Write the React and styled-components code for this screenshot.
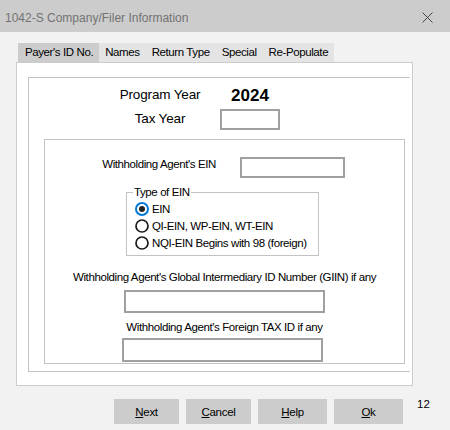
import React from "react";
import styled, { createGlobalStyle } from "styled-components";

const GlobalStyle = createGlobalStyle`
  html, body { margin: 0; padding: 0; }
  body {
    background: #f2f2f2;
    font-family: "Liberation Sans", Arial, sans-serif;
    color: #000;
  }
`;

const Window = styled.div`
  width: 450px;
  height: 430px;
  display: flex;
  flex-direction: column;
  background: #f2f2f2;
  overflow: hidden;
`;

const TitleBar = styled.div`
  height: 32px;
  box-sizing: border-box;
  padding: 3px 17px 0 5px;
  background: #cccccc;
  display: flex;
  align-items: center;
  justify-content: space-between;
`;

const Title = styled.span`
  font-size: 12px;
  color: #737373;
  line-height: 16px;
`;

const Body = styled.div`
  padding: 11px 0 0 16px;
  display: flex;
  flex-direction: column;
`;

const TabStrip = styled.div`
  display: flex;
  height: 19px;
  margin-left: 2px;
`;

const Tab = styled.div`
  padding: 0 ${(p) => (p.$active ? "6px 0 7px" : "6px")};
  background: ${(p) => (p.$active ? "#cccccc" : "#e4e4e4")};
  font-size: 11.5px;
  letter-spacing: -0.4px;
  line-height: 19px;
  white-space: nowrap;
`;

const Panel = styled.div`
  width: 397px;
  height: 324px;
  box-sizing: border-box;
  border: 1px solid #cccccc;
  background: #ffffff;
  padding: 14px 0 0 11px;
`;

const OuterGroup = styled.div`
  width: 382px;
  height: 295px;
  box-sizing: border-box;
  border-top: 1px solid #c3c3c3;
  border-left: 1px solid #c3c3c3;
  border-bottom: 1px solid #c3c3c3;
  padding-top: 5px;
`;

const YearGrid = styled.div`
  display: grid;
  grid-template-columns: 100px 80px;
  grid-auto-rows: 24px;
  margin-left: 81px;
  align-items: center;
  justify-items: center;
`;

const BigLabel = styled.span`
  font-size: 13.5px;
  letter-spacing: -0.15px;
  line-height: 16px;
  white-space: nowrap;
`;

const YearValue = styled.span`
  font-size: 17px;
  font-weight: bold;
  line-height: 20px;
  margin-top: 2px;
`;

const TextBox = styled.input`
  width: ${(p) => p.$w}px;
  height: ${(p) => p.$h}px;
  box-sizing: border-box;
  border: 2px solid #a0a0a0;
  background: #ffffff;
  padding: 0;
  margin: 0;
  outline: none;
  display: block;
`;

const InnerBox = styled.div`
  margin: 8px 0 0 15px;
  width: 361px;
  height: 225px;
  box-sizing: border-box;
  border: 1px solid #c3c3c3;
  display: flex;
  flex-direction: column;
`;

const Label = styled.span`
  font-size: 11.5px;
  letter-spacing: -0.4px;
  line-height: 14px;
  white-space: nowrap;
`;

const EinRow = styled.div`
  display: flex;
  align-items: flex-start;
  gap: 24px;
  margin-top: 17px;
`;

const EinLabel = styled(Label)`
  width: 171px;
  text-align: right;
`;

const TypeFieldset = styled.fieldset`
  margin: 8px 0 0 81px;
  width: 193px;
  box-sizing: border-box;
  border: 1px solid #c3c3c3;
  padding: 1px 0 4px 0;
  min-inline-size: 0;
`;

const Legend = styled.legend`
  margin-left: 6px;
  padding: 0 1px;
  font-size: 11.5px;
  letter-spacing: -0.4px;
  line-height: 13px;
`;

const RadioList = styled.div`
  padding-left: 8px;
  display: flex;
  flex-direction: column;
`;

const RadioRow = styled.label`
  display: flex;
  align-items: center;
  gap: 3px;
  height: 17px;
`;

const Stack = styled.div`
  display: flex;
  flex-direction: column;
  align-items: center;
`;

const StackLabel = styled(Label)`
  margin-top: ${(p) => p.$mt}px;
`;

const StackBox = styled(TextBox)`
  margin-top: ${(p) => p.$mt}px;
  margin-right: ${(p) => p.$shift || 0}px;
`;

const Footer = styled.div`
  display: flex;
  align-items: flex-start;
  gap: 7px;
  margin: 13px 0 0 98px;
`;

const Button = styled.button`
  width: ${(p) => p.$w}px;
  height: 25px;
  border: none;
  background: #cccccc;
  padding: 0;
  font-family: "Liberation Sans", Arial, sans-serif;
  font-size: 11.5px;
  letter-spacing: -0.3px;
  color: #000;
`;

const PageNum = styled.span`
  font-size: 11.5px;
  line-height: 14px;
  margin: -2px 0 0 7px;
`;

function CloseIcon() {
  return (
    <svg width="11" height="11" viewBox="0 0 11 11">
      <path d="M0.5 0.5 L10.5 10.5 M10.5 0.5 L0.5 10.5" stroke="#444" strokeWidth="1" fill="none" />
    </svg>
  );
}

function RadioMark({ checked }) {
  return (
    <svg width="14" height="14" viewBox="0 0 14 14">
      {checked ? (
        <>
          <circle cx="7" cy="7" r="6" fill="#fff" stroke="#0078d7" strokeWidth="2" />
          <circle cx="7" cy="7" r="3" fill="#222" />
        </>
      ) : (
        <circle cx="7" cy="7" r="6" fill="#fff" stroke="#1a1a1a" strokeWidth="1.7" />
      )}
    </svg>
  );
}

const tabs = ["Payer's ID No.", "Names", "Return Type", "Special", "Re-Populate"];
const radios = ["EIN", "QI-EIN, WP-EIN, WT-EIN", "NQI-EIN Begins with 98 (foreign)"];
const buttons = [
  { key: "N", rest: "ext", w: 65 },
  { key: "C", rest: "ancel", w: 65 },
  { key: "H", rest: "elp", w: 69 },
  { key: "O", rest: "k", w: 69 },
];

export default function App() {
  return (
    <>
      <GlobalStyle />
      <Window>
        <TitleBar>
          <Title>1042-S Company/Filer Information</Title>
          <CloseIcon />
        </TitleBar>
        <Body>
          <TabStrip>
            {tabs.map((t, i) => (
              <Tab key={t} $active={i === 0}>{t}</Tab>
            ))}
          </TabStrip>
          <Panel>
            <OuterGroup>
              <YearGrid>
                <BigLabel>Program Year</BigLabel>
                <YearValue>2024</YearValue>
                <BigLabel>Tax Year</BigLabel>
                <TextBox $w={60} $h={21} />
              </YearGrid>
              <InnerBox>
                <EinRow>
                  <EinLabel>Withholding Agent's EIN</EinLabel>
                  <TextBox $w={105} $h={21} />
                </EinRow>
                <TypeFieldset>
                  <Legend>Type of EIN</Legend>
                  <RadioList>
                    {radios.map((r, i) => (
                      <RadioRow key={r}>
                        <RadioMark checked={i === 0} />
                        <Label>{r}</Label>
                      </RadioRow>
                    ))}
                  </RadioList>
                </TypeFieldset>
                <Stack>
                  <StackLabel $mt={14}>
                    Withholding Agent's Global Intermediary ID Number (GIIN) if any
                  </StackLabel>
                  <StackBox $mt={6} $w={201} $h={23} />
                  <StackLabel $mt={7}>Withholding Agent's Foreign TAX ID if any</StackLabel>
                  <StackBox $mt={4} $w={201} $h={24} $shift={4} />
                </Stack>
              </InnerBox>
            </OuterGroup>
          </Panel>
          <Footer>
            {buttons.map((b) => (
              <Button key={b.key} $w={b.w}>
                <u>{b.key}</u>
                {b.rest}
              </Button>
            ))}
            <PageNum>12</PageNum>
          </Footer>
        </Body>
      </Window>
    </>
  );
}
